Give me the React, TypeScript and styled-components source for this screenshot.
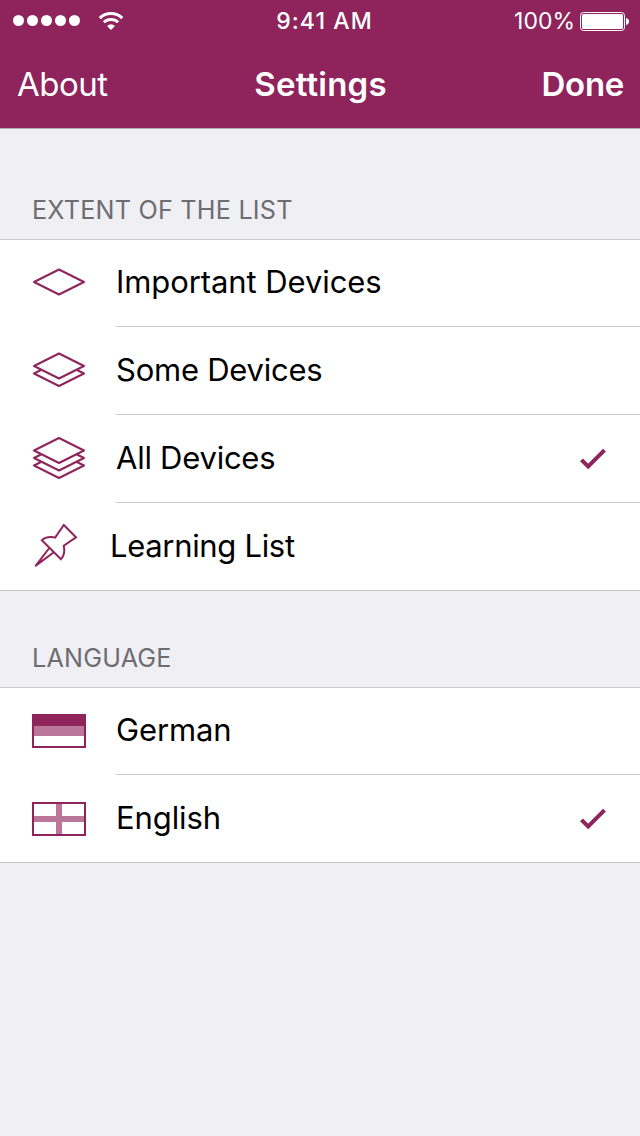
import React from "react";
import styled, { createGlobalStyle } from "styled-components";

const plum = "#8f245c";
const plumLight = "#bb7799";

const GlobalStyle = createGlobalStyle`
  * { box-sizing: border-box; }
  body { margin: 0; background: #efeff4; }
`;

const Screen = styled.div`
  width: 640px;
  height: 1136px;
  overflow: hidden;
  background: #efeff4;
  color: #000;
  font-family: Inter, "Liberation Sans", sans-serif;
`;

const Header = styled.header`
  height: 129px;
  background: ${plum};
  border-bottom: 1px solid #b2b0b4;
  color: #fff;
`;

const StatusBar = styled.div`
  display: grid;
  grid-template-columns: 1fr auto 1fr;
  align-items: center;
  height: 40px;
  padding: 0 11px 0 13px;
`;

const Signal = styled.div`
  display: flex;
  align-items: center;
`;

const Dots = styled.div`
  display: flex;
  gap: 3px;
  margin-right: 18px;
`;

const Dot = styled.i`
  width: 11px;
  height: 11px;
  border-radius: 50%;
  background: #fff;
`;

const Clock = styled.time`
  padding: 1px 0 0 7px;
  font-size: 23px;
  font-weight: 500;
  line-height: 40px;
  letter-spacing: 1.1px;
`;

const Power = styled.div`
  display: flex;
  align-items: center;
  justify-content: flex-end;
  gap: 5px;
  font-size: 23px;
  line-height: 40px;
  > span { padding-top: 1px; }
`;

const NavBar = styled.nav`
  display: grid;
  grid-template-columns: 1fr auto 1fr;
  align-items: center;
  height: 88px;
  padding: 0 16px 0 17px;
`;

const NavText = styled.span<{ $bold?: boolean; $end?: boolean; $spacing: number }>`
  font-size: 33px;
  line-height: 88px;
  font-weight: ${(p) => (p.$bold ? 600 : 400)};
  letter-spacing: ${(p) => p.$spacing}px;
  text-align: ${(p) => (p.$end ? "right" : "left")};
`;

const SectionTitle = styled.h2<{ $height: number; $spacing: number }>`
  display: flex;
  align-items: flex-end;
  height: ${(p) => p.$height}px;
  margin: 0;
  padding: 0 32px 13px;
  font-size: 25.2px;
  line-height: 32px;
  font-weight: 400;
  letter-spacing: ${(p) => p.$spacing}px;
  color: #6d6d72;
`;

const List = styled.div`
  background: #fff;
  border-top: 1px solid #c8c7cc;
  border-bottom: 1px solid #c8c7cc;
`;

const Row = styled.div`
  display: flex;
  height: 88px;
  &:first-child, &:last-child { height: 87px; }
`;

const IconCell = styled.div`
  width: 116px;
  flex: none;
  display: flex;
  svg { display: block; }
`;

const Label = styled.span<{ $spacing: number; $shift: number }>`
  margin-left: ${(p) => p.$shift}px;
  font-size: 31px;
  line-height: 86px;
  letter-spacing: ${(p) => p.$spacing}px;
  white-space: nowrap;
  ${Row}:first-child & { line-height: 84px; }
`;

const RowBody = styled.div`
  flex: 1;
  display: flex;
  justify-content: space-between;
  padding-right: 34px;
  border-bottom: 1px solid #c8c7cc;
  ${Row}:last-child & { border-bottom: 0; }
`;

const Art = ({ children }: { children: React.ReactNode }) => (
  <svg width="116" height="87" viewBox="0 0 116 87" fill="none" stroke={plum} strokeWidth="2">
    {children}
  </svg>
);

const OneLayer = () => (
  <Art>
    <path d="M59 29.5 84 42 59 54.5 34 42Z" strokeLinejoin="round" />
  </Art>
);

const TwoLayers = () => (
  <Art>
    <path d="M59 26.5 84 39 59 51.5 34 39Z" strokeLinejoin="round" />
    <path d="M41 43 34 46.5 59 59 84 46.5 77 43" strokeLinejoin="round" />
  </Art>
);

const ThreeLayers = () => (
  <Art>
    <path d="M59 23 84 35.5 59 48 34 35.5Z" strokeLinejoin="round" />
    <path d="M41 39.5 34 43 59 55.5 84 43 77 39.5" strokeLinejoin="round" />
    <path d="M41 47 34 50.5 59 63 84 50.5 77 47" strokeLinejoin="round" />
  </Art>
);

const Pin = () => (
  <Art>
    <path d="M63.8 22 76 34.3 63.8 42.7C64.9 48 64.3 52.5 61 56.2L41.8 37.3C45 33.8 50 33.6 55.3 34.4Z" />
    <path d="M49.3 45 35.8 62.6 53.8 49.2" strokeLinejoin="round" />
  </Art>
);

const GermanFlag = () => (
  <Art>
    <path d="M32 26h54v12H32Z" fill={plum} stroke="none" />
    <path d="M32 38h54v10H32Z" fill={plumLight} stroke="none" />
    <path d="M33 27h52v32H33Z" />
  </Art>
);

const EnglishFlag = () => (
  <Art>
    <path d="M56 28h6v32h-6ZM33 41h52v6H33Z" fill={plumLight} stroke="none" />
    <path d="M33 28h52v32H33Z" />
  </Art>
);

const Check = () => (
  <svg width="26" height="87" viewBox="0 0 26 87" fill="none" stroke={plum} strokeWidth="4">
    <path d="M1.5 44.8 8.2 51.5 24.5 35.2" />
  </svg>
);

const Wifi = () => (
  <svg width="26" height="20" viewBox="0 0 26 20" fill="none" stroke="#fff" strokeWidth="3">
    <path d="M1.8 7.1C8 1 18 1 24.2 7.1" />
    <path d="M5.9 11.3C9.8 7.5 16.2 7.5 20.1 11.3" />
    <path d="M13 19 9 15Q13 11.5 17 15Z" fill="#fff" stroke="none" />
  </svg>
);

const Battery = () => (
  <svg width="49" height="20" viewBox="0 0 49 20">
    <rect x="0.5" y="1.5" width="44" height="18" rx="3" fill="none" stroke="#fff" />
    <rect x="2" y="3" width="41" height="15" rx="1.5" fill="#fff" />
    <path d="M46 7q3 .6 3 3.5T46 14Z" fill="#fff" />
  </svg>
);

type Item = {
  label: string;
  icon: React.ReactNode;
  spacing: number;
  shift?: number;
  checked?: boolean;
};

const extentItems: Item[] = [
  { label: "Important Devices", icon: <OneLayer />, spacing: -0.08 },
  { label: "Some Devices", icon: <TwoLayers />, spacing: -0.25 },
  { label: "All Devices", icon: <ThreeLayers />, spacing: -0.25, checked: true },
  { label: "Learning List", icon: <Pin />, spacing: -0.32, shift: -6 },
];

const languageItems: Item[] = [
  { label: "German", icon: <GermanFlag />, spacing: -0.12 },
  { label: "English", icon: <EnglishFlag />, spacing: -0.1, checked: true },
];

const SettingsList = ({ items }: { items: Item[] }) => (
  <List>
    {items.map((item) => (
      <Row key={item.label}>
        <IconCell>{item.icon}</IconCell>
        <RowBody>
          <Label $spacing={item.spacing} $shift={item.shift ?? 0}>
            {item.label}
          </Label>
          {item.checked && <Check />}
        </RowBody>
      </Row>
    ))}
  </List>
);

export default function App() {
  return (
    <Screen>
      <GlobalStyle />
      <Header>
        <StatusBar>
          <Signal>
            <Dots>
              {[0, 1, 2, 3, 4].map((n) => (
                <Dot key={n} />
              ))}
            </Dots>
            <Wifi />
          </Signal>
          <Clock>9:41 AM</Clock>
          <Power>
            <span>100%</span>
            <Battery />
          </Power>
        </StatusBar>
        <NavBar>
          <NavText $spacing={-0.5}>About</NavText>
          <NavText $bold $spacing={0.2}>Settings</NavText>
          <NavText $bold $end $spacing={-0.3}>Done</NavText>
        </NavBar>
      </Header>
      <SectionTitle $height={110} $spacing={0.21}>EXTENT OF THE LIST</SectionTitle>
      <SettingsList items={extentItems} />
      <SectionTitle $height={96} $spacing={0.2}>LANGUAGE</SectionTitle>
      <SettingsList items={languageItems} />
    </Screen>
  );
}
